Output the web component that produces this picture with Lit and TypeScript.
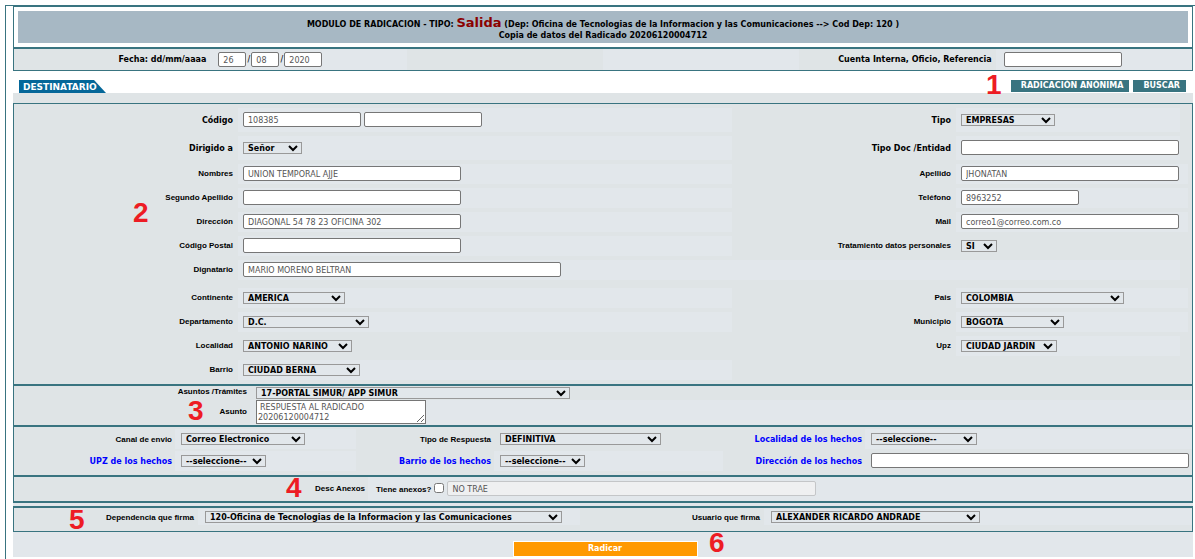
import { LitElement, html, css, nothing, TemplateResult } from "lit";
import { customElement } from "lit/decorators.js";
import { styleMap } from "lit/directives/style-map.js";

interface Field {
  id: string;
  label: string;
  kind: "text" | "select";
  width?: number;
  value?: string;
  font?: "wide" | "narrow" | "link";
  cell?: string;
}

const text = (id: string, label: string, width: number, value = "", extra: Partial<Field> = {}): Field =>
  ({ id, label, kind: "text", width, value, ...extra });
const pick = (id: string, label: string, width: number, value: string, extra: Partial<Field> = {}): Field =>
  ({ id, label, kind: "select", width, value, ...extra });

@customElement("app-root")
export class AppRoot extends LitElement {
  static styles = css`
    :host {
      display: block;
      --line: #397480;
      --dark: #dfe4e6;
      --light: #e2e7eb;
      font-family: Verdana, "DejaVu Sans", sans-serif;
      font-size: 8px;
      color: #000;
      background: #fff;
    }
    * { box-sizing: border-box; }
    .page {
      position: relative;
      margin: 5px 0 0 5px;
      padding: 0 2px 0 7px;
      border-top: 1px solid var(--line);
      border-left: 1px solid var(--line);
      min-height: calc(100vh - 5px);
    }
    .panel {
      border: 1px solid var(--line);
      background: var(--dark);
    }
    .heading { background: #fff; padding: 4px; }
    .banner {
      margin: 0;
      height: 32px;
      padding-top: 6px;
      background: #a7b8c4;
      text-align: center;
      font-size: 8px;
      font-weight: bold;
      line-height: 11px;
    }
    .banner .kind { color: #8b0000; font-size: 13px; }
    .dates {
      display: grid;
      grid-template-columns: repeat(6, 1fr);
      align-items: stretch;
      height: 23px;
    }
    .dates > * { display: flex; align-items: center; }
    .dates .box { margin-bottom: 0; }
    .end { justify-content: flex-end; padding-right: 4px; white-space: nowrap; }
    .light { background: var(--light); }
    .date-boxes { padding-left: 8px; }
    .slash { width: 5px; text-align: center; }
    label { font-weight: bold; line-height: 11px; white-space: nowrap; }
    .narrow { font-family: "Liberation Sans", Arial, sans-serif; }
    .link { color: #00f; }

    input, select, textarea, button { font-family: inherit; font-size: 8px; margin: 0; min-width: 0; max-width: 100%; }
    .box {
      height: 15px;
      margin-bottom: 1px;
      border: 1px solid #767676;
      border-radius: 2px;
      padding: 1px 4px 0;
      background: #fff;
      color: #555;
    }
    .box:disabled { background: #eff0f1; border-color: #c4c6c8; color: #555; }
    .day { width: 28px; }
    .year { width: 38px; }
    .account { width: 118px; margin-left: 8px; }
    .drop {
      height: 12px;
      border: 1px solid #999;
      border-radius: 0;
      padding: 0;
      background: var(--light);
      color: #000;
      font-weight: bold;
    }

    .bar {
      display: flex;
      align-items: flex-end;
      justify-content: space-between;
      height: 22px;
      padding: 0 7px 0 6px;
    }
    .tab {
      margin: 0;
      width: 87px;
      height: 13px;
      padding-left: 4px;
      background: #056799;
      clip-path: polygon(0 0, 75px 0, 100% 100%, 0 100%);
      color: #fff;
      font-size: 9px;
      font-weight: bold;
      line-height: 14px;
    }
    .actions { display: flex; gap: 4px; padding-bottom: 1px; }
    .action {
      height: 12px;
      border: 0;
      padding: 0 6px 0 10px;
      background: var(--line);
      color: #fff;
      font-weight: bold;
      line-height: 12px;
    }
    .strip { height: 10px; background: var(--dark); }

    .person {
      display: grid;
      grid-template-columns: 224fr 494fr 224fr 232fr;
      grid-auto-rows: 20px;
      row-gap: 4px;
      padding: 4px 4px 4px 0;
      grid-template-rows: 24px 24px;
    }
    .tag { display: flex; justify-content: flex-end; align-items: center; padding-right: 5px; }
    .person .narrow { padding-bottom: 2px; }
    .cell { display: flex; align-items: center; gap: 3px; padding-left: 5px; background: var(--light); }
    .plain { background: none; }
    .inset { margin-right: 8px; }
    .span { grid-column: span 3; margin-right: 8px; }
    .places { padding-top: 4px; grid-template-rows: 20px; }

    .subject { display: grid; grid-template-columns: 236fr 942fr; grid-template-rows: 14px 25px; }
    .subject .tag { padding-right: 3px; }
    .subject .cell { padding-left: 6px; }
    .subject .narrow { padding-bottom: 3px; }
    .note {
      display: block;
      width: 170px;
      height: 24px;
      margin-bottom: 1px;
      border: 1px solid #767676;
      padding: 2px 1px 0;
      background: #fff;
      color: #555;
      line-height: 10px;
      text-indent: 2px;
      overflow: hidden;
    }
    .facts {
      display: grid;
      grid-template-columns: 161fr 181fr 138fr 229fr 142fr 327fr;
      grid-template-rows: 20px 20px;
      row-gap: 2px;
      padding: 2px 0 4px;
    }
    .facts .tag { padding-right: 3px; }
    .facts .cell { padding: 0 3px 0 6px; }
    .full { width: 100%; }
    .attach { display: grid; grid-template-columns: 354fr 824fr; height: 27px; border-bottom-width: 2px; }
    .attach .tag { padding: 0 3px 2px 0; }
    .attach .cell { padding-left: 8px; }
    .check { width: 10px; height: 10px; margin-bottom: 2px; }
    .gap { height: 3px; background: var(--light); }
    .sign {
      display: grid;
      grid-template-columns: 184fr 382fr 184fr 428fr;
      grid-template-rows: 16px;
      border-top-width: 2px;
      padding: 1px 0 6px;
    }
    .sign .tag { padding-right: 4px; }
    .sign .cell { padding-left: 7px; }
    .foot { display: flex; justify-content: center; height: 25px; padding: 9px 0 0 4px; background: var(--light); }
    .submit {
      width: 185px;
      height: 16px;
      border: 1px solid #fff;
      background: #f90;
      color: #fff;
      font-weight: bold;
      padding: 0;
      line-height: 14px;
    }
    .mark {
      position: absolute;
      color: #ed1c24;
      font-family: "Liberation Sans", Arial, sans-serif;
      font-size: 28px;
      font-weight: bold;
      line-height: 28px;
    }
  `;

  private drop(f: Field): TemplateResult {
    return html`<select class="drop" id=${f.id} style=${styleMap({ width: `${f.width}px` })}><option>${f.value}</option></select>`;
  }

  private box(f: Field): TemplateResult {
    return html`<input class="box ${f.width ? "" : "full"}" id=${f.id} type="text" .value=${f.value ?? ""}
      style=${f.width ? styleMap({ width: `${f.width}px` }) : nothing}>`;
  }

  private field(f: Field, more: unknown = nothing): TemplateResult {
    return html`
      <div class="tag"><label class=${f.font ?? "narrow"} for=${f.id}>${f.label}</label></div>
      <div class="cell ${f.cell ?? ""}">${f.kind === "select" ? this.drop(f) : this.box(f)}${more}</div>`;
  }

  private fields(list: Field[]) {
    return list.map((f) => this.field(f));
  }

  private marks = [
    { n: 1, left: 980, top: 65 },
    { n: 2, left: 127, top: 193 },
    { n: 3, left: 182, top: 391 },
    { n: 4, left: 280, top: 468 },
    { n: 5, left: 63, top: 500 },
    { n: 6, left: 703, top: 523 },
  ];

  render() {
    return html`
      <main class="page">
        <header class="panel heading">
          <h1 class="banner">
            MODULO DE RADICACION - TIPO: <span class="kind">Salida</span> (Dep: Oficina de Tecnologias de la Informacion y las Comunicaciones --&gt; Cod Dep: 120 )<br>
            Copia de datos del Radicado 20206120004712
          </h1>
        </header>
        <section class="panel dates">
          <div class="end"><label for="dia">Fecha: dd/mm/aaaa</label></div>
          <div class="light date-boxes">
            <input class="box day" id="dia" .value=${"26"}><span class="slash">/</span>
            <input class="box day" aria-label="Mes" .value=${"08"}><span class="slash">/</span>
            <input class="box year" aria-label="Año" .value=${"2020"}>
          </div>
          <div></div>
          <div class="light"></div>
          <div class="end"><label for="cuenta">Cuenta Interna, Oficio, Referencia</label></div>
          <div class="light"><input class="box account" id="cuenta"></div>
        </section>
        <div class="bar">
          <h2 class="tab">DESTINATARIO</h2>
          <div class="actions">
            <button class="action">RADICACIÓN ANÓNIMA</button>
            <button class="action">BUSCAR</button>
          </div>
        </div>
        <div class="strip"></div>
        <section class="panel">
          <div class="person">
            ${this.field(text("codigo", "Código", 118, "108385", { font: "wide" }),
              html`<input class="box" aria-label="Código adicional" style=${styleMap({ width: "118px" })}>`)}
            ${this.fields([
              pick("tipo", "Tipo", 94, "EMPRESAS", { font: "wide", cell: "inset" }),
              pick("dirigido", "Dirigido a", 59, "Señor", { font: "wide" }),
              text("doc", "Tipo Doc /Entidad", 218, "", { font: "wide", cell: "inset" }),
              text("nombres", "Nombres", 218, "UNION TEMPORAL AJJE"),
              text("apellido", "Apellido", 218, "JHONATAN"),
              text("segundo", "Segundo Apellido", 218),
              text("telefono", "Teléfono", 118, "8963252"),
              text("direccion", "Dirección", 218, "DIAGONAL 54 78 23 OFICINA 302"),
              text("mail", "Mail", 218, "correo1@correo.com.co"),
              text("postal", "Código Postal", 218),
              pick("datos", "Tratamiento datos personales", 36, "SI", { cell: "plain" }),
              text("dignatario", "Dignatario", 318, "MARIO MORENO BELTRAN", { cell: "span" }),
            ])}
          </div>
          <div class="person places">
            ${this.fields([
              pick("continente", "Continente", 102, "AMERICA"),
              pick("pais", "Pais", 163, "COLOMBIA"),
              pick("departamento", "Departamento", 126, "D.C."),
              pick("municipio", "Municipio", 103, "BOGOTA"),
              pick("localidad", "Localidad", 109, "ANTONIO NARINO", { cell: "plain" }),
              pick("upz", "Upz", 96, "CIUDAD JARDIN", { cell: "inset" }),
              pick("barrio", "Barrio", 117, "CIUDAD BERNA"),
            ])}
          </div>
        </section>
        <section class="panel subject">
          ${this.field(pick("tramites", "Asuntos /Trámites", 314, "17-PORTAL SIMUR/ APP SIMUR", { cell: "plain" }))}
          <div class="tag"><label class="narrow" for="asunto">Asunto</label></div>
          <div class="cell"><textarea class="note" id="asunto" .value=${"RESPUESTA AL RADICADO\n20206120004712"}></textarea></div>
        </section>
        <section class="panel facts">
          ${this.fields([
            pick("canal", "Canal de envio", 124, "Correo Electronico"),
            pick("respuesta", "Tipo de Respuesta", 161, "DEFINITIVA", { cell: "plain" }),
            pick("localidad-hechos", "Localidad de los hechos", 106, "--seleccione--", { font: "link" }),
            pick("upz-hechos", "UPZ de los hechos", 85, "--seleccione--", { font: "link" }),
            pick("barrio-hechos", "Barrio de los hechos", 85, "--seleccione--", { font: "link" }),
            { id: "direccion-hechos", label: "Dirección de los hechos", kind: "text", font: "link", cell: "plain" },
          ])}
        </section>
        <section class="panel attach">
          <div class="tag"><label class="narrow" for="anexos">Desc Anexos</label></div>
          <div class="cell">
            <label class="narrow" for="tiene">Tiene anexos?</label>
            <input class="check" id="tiene" type="checkbox">
            <input class="box" id="anexos" disabled .value=${"NO TRAE"} style=${styleMap({ width: "369px" })}>
          </div>
        </section>
        <div class="gap"></div>
        <section class="panel sign">
          ${this.fields([
            pick("dependencia", "Dependencia que firma", 357, "120-Oficina de Tecnologias de la Informacion y las Comunicaciones"),
            pick("usuario", "Usuario que firma", 209, "ALEXANDER RICARDO ANDRADE"),
          ])}
        </section>
        <footer class="foot"><button class="submit">Radicar</button></footer>
        ${this.marks.map((m) => html`<span class="mark" style=${styleMap({ left: `${m.left}px`, top: `${m.top}px` })}>${m.n}</span>`)}
      </main>`;
  }
}
